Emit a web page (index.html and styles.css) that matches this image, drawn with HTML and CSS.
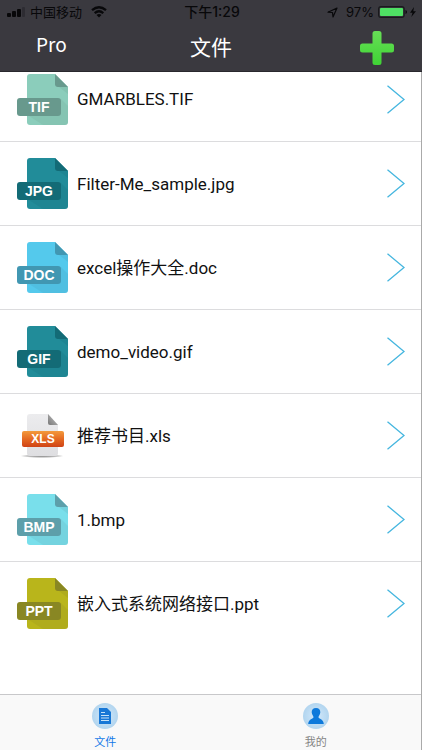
FILE: index.html
```html
<!DOCTYPE html>
<html lang="zh-CN">
<head>
<meta charset="utf-8">
<meta name="viewport" content="width=device-width, initial-scale=1">
<title>文件</title>
<link rel="stylesheet" href="styles.css">
</head>
<body>
<svg class="defs" aria-hidden="true">
  <symbol id="page" viewBox="0 0 51 51">
    <path class="sheet" d="M13 0H38L51 13V48Q51 51 48 51H13Q10 51 10 48V3Q10 0 13 0Z"/>
    <path class="shade" d="M51 13V48Q51 51 48 51H26L12 42H41Q44 42 44 39V29L38 25H44L51 32Z" opacity=".18"/>
    <path class="shade" d="M38 10L51 20V13H41Z" opacity=".2"/>
    <path class="shade" d="M38 0L51 13H41Q38 13 38 10Z"/>
    <rect class="shade" x="0" y="24" width="44" height="18" rx="3"/>
  </symbol>
  <symbol id="chevron" viewBox="0 0 18 29">
    <path d="M.5 .8L17 14.5L.5 28.2" fill="none" stroke="#45b6df" stroke-width="1.3"/>
  </symbol>
</svg>
<div class="app">
  <header class="top">
    <div class="status">
      <div class="carrier">
        <svg width="19" height="10" viewBox="0 0 19 10"><rect y="6" width="4" height="4" rx="1"/><rect x="5" y="4" width="4" height="6" rx="1"/><rect x="10" y="2" width="4" height="8" rx="1"/><rect x="15" width="3" height="10" rx="1" opacity=".25"/></svg>
        <span>中国移动</span>
        <svg width="16" height="12" viewBox="0 0 16 12"><g fill="none" stroke="#08080a" stroke-width="2.3"><path d="M1 4.2Q8-1.8 15 4.2"/><path d="M3.7 7.2Q8 3.4 12.3 7.2"/></g><path d="M5.5 9Q8 7.2 10.5 9L8 11.6Z"/></svg>
      </div>
      <div class="time">下午1:29</div>
      <div class="power">
        <svg width="11" height="11" viewBox="0 0 11 11"><path d="M1 5.2L10 1L6 10L5.5 5.5Z" fill="none" stroke="#08080a" stroke-width="1.2" stroke-linejoin="round"/></svg>
        <span>97%</span>
        <svg width="39" height="12" viewBox="0 0 39 12"><rect x=".6" y=".6" width="25.6" height="10.8" rx="2.5" fill="none" stroke="#19191c" stroke-width="1.1"/><rect x="2" y="2" width="23" height="8" rx="1" fill="#4fe064"/><path d="M27.5 4Q29 4.5 29 6T27.5 8Z"/><path d="M36 1L32 6.8H34.5L33.3 11L38 5.2H35.3Z"/></svg>
      </div>
    </div>
    <nav class="bar">
      <button class="pro" type="button">Pro</button>
      <h1>文件</h1>
      <button class="add" type="button" aria-label="添加"><svg width="34" height="34" viewBox="0 0 34 34"><defs><linearGradient id="green" x2="0" y2="1"><stop stop-color="#67df56"/><stop offset="1" stop-color="#3fd335"/></linearGradient></defs><path fill="url(#green)" d="M15 0H19Q21.500 0 21.500 2.500V12.500H31.500Q34 12.500 34 15V19Q34 21.500 31.500 21.500H21.500V31.500Q21.500 34 19 34H15Q12.500 34 12.500 31.500V21.500H2.500Q0 21.500 0 19V15Q0 12.500 2.500 12.500H12.500V2.500Q12.500 0 15 0Z"/></svg></button>
    </nav>
  </header>
  <main class="files">
    <ul>
      <li><a class="file tif" href="#tif"><svg class="icon" viewBox="0 0 51 51"><use href="#page"/><text x="22" y="38">TIF</text></svg><span class="name">GMARBLES.TIF</span><svg class="go"><use href="#chevron"/></svg></a></li>
      <li><a class="file teal" href="#jpg"><svg class="icon" viewBox="0 0 51 51"><use href="#page"/><text x="22" y="38">JPG</text></svg><span class="name">Filter-Me_sample.jpg</span><svg class="go"><use href="#chevron"/></svg></a></li>
      <li><a class="file doc" href="#doc"><svg class="icon" viewBox="0 0 51 51"><use href="#page"/><text x="22" y="38">DOC</text></svg><span class="name">excel操作大全.doc</span><svg class="go"><use href="#chevron"/></svg></a></li>
      <li><a class="file teal" href="#gif"><svg class="icon" viewBox="0 0 51 51"><use href="#page"/><text x="22" y="38">GIF</text></svg><span class="name">demo_video.gif</span><svg class="go"><use href="#chevron"/></svg></a></li>
      <li><a class="file xls" href="#xls"><svg class="icon" viewBox="0 0 51 51">
        <defs>
          <linearGradient id="orange" x2="0" y2="1"><stop stop-color="#f39a3c"/><stop offset=".5" stop-color="#e56a22"/><stop offset="1" stop-color="#cf4316"/></linearGradient>
          <linearGradient id="paper" x2="0" y2="1"><stop stop-color="#ececee"/><stop offset="1" stop-color="#dedee1"/></linearGradient>
          <linearGradient id="fold" x1="0" y1="1" x2="1" y2="0"><stop stop-color="#777"/><stop offset="1" stop-color="#c8c8c8"/></linearGradient>
          <radialGradient id="shadow"><stop stop-color="#888"/><stop offset=".6" stop-color="#b8b8b8"/><stop offset="1" stop-color="#fff"/></radialGradient>
        </defs>
        <ellipse cx="25" cy="46" rx="22" ry="2" fill="url(#shadow)"/>
        <path fill="url(#paper)" d="M13 4H31L41 15V43Q41 46 38 46H13Q10 46 10 43V7Q10 4 13 4Z"/>
        <path fill="url(#fold)" d="M31 4L41 15H33Q31 15 31 13Z"/>
        <rect x="5" y="21" width="42" height="16" rx="2" fill="url(#orange)"/>
        <text x="26" y="33">XLS</text></svg><span class="name">推荐书目.xls</span><svg class="go"><use href="#chevron"/></svg></a></li>
      <li><a class="file bmp" href="#bmp"><svg class="icon" viewBox="0 0 51 51"><use href="#page"/><text x="22" y="38">BMP</text></svg><span class="name">1.bmp</span><svg class="go"><use href="#chevron"/></svg></a></li>
      <li><a class="file ppt" href="#ppt"><svg class="icon" viewBox="0 0 51 51"><use href="#page"/><text x="22" y="38">PPT</text></svg><span class="name">嵌入式系统网络接口.ppt</span><svg class="go"><use href="#chevron"/></svg></a></li>
    </ul>
  </main>
  <nav class="tabs">
    <a class="tab active" href="#files"><svg width="26" height="26" viewBox="0 0 26 26"><defs><radialGradient id="disc"><stop stop-color="#d3e9fb"/><stop offset="1" stop-color="#b2d5ef"/></radialGradient></defs><circle cx="13" cy="13" r="13" fill="url(#disc)"/><path fill="#1777d6" d="M7 5H15L19 9V21H7Z"/><path d="M9 9.500H13M9 12.500H17M9 15H17M9 17.500H17" stroke="#c6e2f8"/></svg><span>文件</span></a>
    <a class="tab" href="#mine"><svg width="26" height="26" viewBox="0 0 26 26"><circle cx="13" cy="13" r="13" fill="url(#disc)"/><path fill="#0d79db" d="M13 5C16 5 17.500 7 17.300 9.500C17.100 12 15.500 13 15.500 14.300C15.500 16 20.500 16 20.800 21H5.200C5.500 16 10.500 16 10.500 14.300C10.500 13 8.900 12 8.700 9.500C8.500 7 10 5 13 5Z"/></svg><span>我的</span></a>
  </nav>
</div>
</body>
</html>
```

FILE: styles.css
```css
* {
  box-sizing: border-box;
}

body {
  margin: 0;
  background: #fff;
  color: #111;
  font-family: Inter, "Noto Sans CJK SC", sans-serif;
}

.defs {
  position: absolute;
  width: 0;
  height: 0;
}

.app {
  display: flex;
  flex-direction: column;
  min-height: 100vh;
  border-right: 1px solid #aaa;
}

.top {
  position: sticky;
  top: 0;
  z-index: 1;
  height: 72px;
  margin-right: -1px;
  background: #3a393f;
  border-bottom: 1px solid #29282d;
}

.status {
  display: grid;
  grid-template-columns: 1fr auto 1fr;
  align-items: center;
  height: 24px;
  padding: 0 5px 0 7px;
  color: #08080a;
  fill: #08080a;
  font-size: 13px;
  line-height: 24px;
}

.carrier,
.power {
  display: flex;
  align-items: center;
  gap: 4px;
}

.carrier span {
  margin-right: 5px;
}

.power {
  justify-content: flex-end;
}

.power svg:first-child {
  margin-right: 4px;
}

.time {
  font-size: 14px;
  font-weight: 500;
}

.bar {
  display: grid;
  grid-template-columns: 1fr auto 1fr;
  align-items: center;
  height: 47px;
  padding: 0 28px;
}

.bar button {
  padding: 0;
  border: 0;
  background: none;
  color: #fff;
}

.bar .pro {
  justify-self: start;
  align-self: start;
  padding-left: 8px;
  font: 19px/40px "Noto Sans CJK SC", sans-serif;
}

.bar h1 {
  margin: 0;
  color: #fff;
  font-size: 21px;
  font-weight: 400;
  line-height: 47px;
}

.bar .add {
  justify-self: end;
  height: 34px;
}

.bar svg {
  display: block;
}

.files {
  flex: 1;
  margin-top: -15px;
}

.files ul {
  margin: 0;
  padding: 0;
  list-style: none;
}

.files li + li {
  border-top: 1px solid #dcdcde;
}

.file {
  display: flex;
  align-items: center;
  height: 83px;
  padding: 0 16px 0 17px;
  color: #111;
  text-decoration: none;
}

.files li:first-child .file {
  height: 84px;
}

.icon {
  width: 51px;
  height: 51px;
  margin-right: 9px;
}

.icon text {
  fill: #fff;
  font: bold 14px "Liberation Sans", sans-serif;
  text-anchor: middle;
}

.sheet {
  fill: var(--sheet);
}

.shade {
  fill: var(--shade);
}

.tif {
  --sheet: #8bcdbb;
  --shade: #68998d;
}

.teal {
  --sheet: #218c99;
  --shade: #136b76;
}

.doc {
  --sheet: #54c9ec;
  --shade: #4197b2;
}

.bmp {
  --sheet: #79dfeb;
  --shade: #5d9faa;
}

.ppt {
  --sheet: #b9b51b;
  --shade: #898723;
}

.xls .icon text {
  font-size: 12px;
}

.name {
  flex: 1;
  font-family: Roboto, "Noto Sans CJK SC", sans-serif;
  font-size: 17px;
  line-height: 24px;
}

.go {
  width: 18px;
  height: 29px;
}

.tabs {
  display: flex;
  height: 56px;
  background: #f9f9f9;
  border-top: 1px solid #c8c8ca;
}

.tab {
  flex: 1;
  display: flex;
  flex-direction: column;
  align-items: center;
  gap: 5px;
  padding-top: 8px;
  color: #858585;
  font-size: 11px;
  line-height: 16px;
  text-decoration: none;
}

.tab.active {
  color: #1479e8;
}
```
